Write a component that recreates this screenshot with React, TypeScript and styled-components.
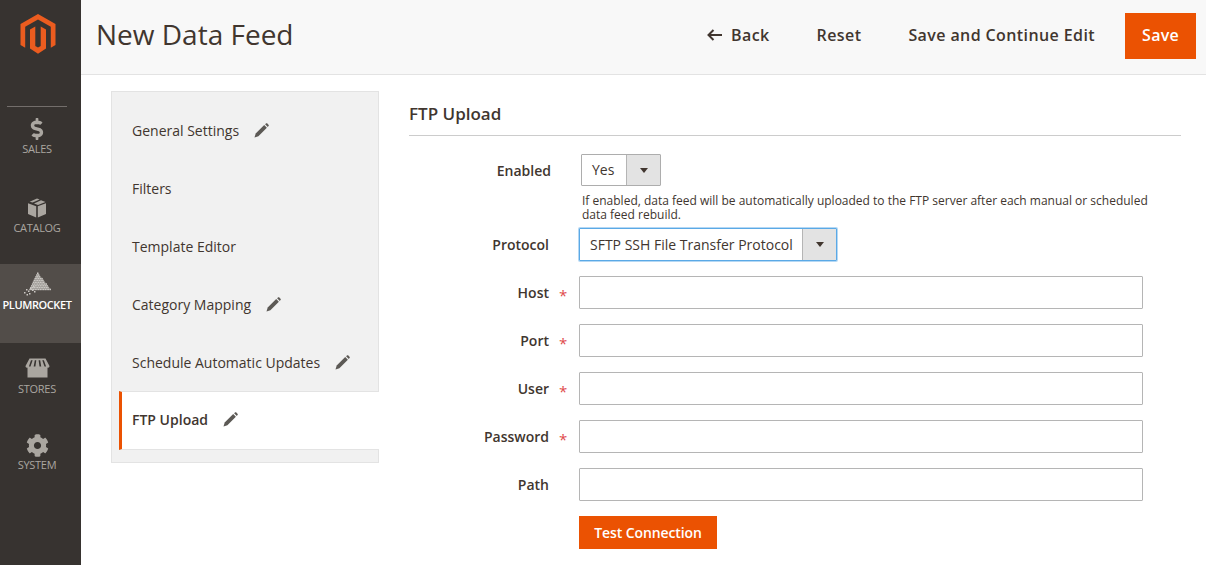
import React from "react";
import styled, { createGlobalStyle } from "styled-components";
import { FaDollarSign, FaCog } from "react-icons/fa";

const Global = createGlobalStyle`
  html, body { margin: 0; padding: 0; background: #fff; }
  body { font-family: "Open Sans", "Liberation Sans", sans-serif; color: #41362f; overflow: hidden; }
  * { box-sizing: border-box; }
`;

const Page = styled.div`
  display: flex;
  width: 1206px;
  height: 565px;
  overflow: hidden;
`;

const Sidebar = styled.nav`
  width: 81px;
  flex: none;
  background: #373330;
  display: flex;
  flex-direction: column;
`;

const LogoWrap = styled.div`
  height: 106px;
  padding-top: 14px;
  padding-right: 6px;
  display: flex;
  justify-content: center;
  align-items: flex-start;
  svg { display: block; }
`;

const Divider = styled.div`
  width: 60px;
  height: 1px;
  margin-left: 7px;
  background: #736e6b;
  margin-bottom: 10px;
`;

const NavItem = styled.div<{ $h: number; $active?: boolean; $top: number }>`
  height: ${(p) => p.$h}px;
  padding-top: ${(p) => p.$top}px;
  padding-right: 7px;
  display: flex;
  flex-direction: column;
  align-items: center;
  background: ${(p) => (p.$active ? "#524d49" : "transparent")};
  color: ${(p) => (p.$active ? "#fff" : "#aaa6a0")};
`;

const NavIcon = styled.div`
  height: 24px;
  display: flex;
  align-items: center;
  justify-content: center;
  color: #aaa6a0;
  svg { display: block; }
`;

const NavLabel = styled.div<{ $active?: boolean; $gap: number }>`
  font-size: 11px;
  font-weight: ${(p) => (p.$active ? 600 : 400)};
  letter-spacing: ${(p) => (p.$active ? "-0.4px" : "-0.3px")};
  line-height: 15px;
  margin-top: ${(p) => p.$gap}px;
  white-space: nowrap;
`;

const Main = styled.div`
  flex: 1;
  display: flex;
  flex-direction: column;
  min-width: 0;
`;

const Header = styled.header`
  height: 75px;
  flex: none;
  background: #f8f8f8;
  border-bottom: 1px solid #e3e3e3;
  display: flex;
  align-items: flex-start;
  padding: 13px 10px 0 15px;
`;

const Title = styled.h1`
  margin: 0;
  font-size: 28px;
  font-weight: 400;
  line-height: 42px;
  color: #41362f;
  flex: 1;
`;

const HeaderAction = styled.button<{ $ml: number }>`
  border: 0;
  background: none;
  padding: 0 0 2px;
  margin-left: ${(p) => p.$ml}px;
  height: 46px;
  display: flex;
  align-items: center;
  gap: 9px;
  font: 600 16px/20px "Open Sans", sans-serif;
  letter-spacing: 0.4px;
  color: #41362f;
  svg { display: block; }
`;

const SaveButton = styled.button`
  margin-left: 30px;
  width: 71px;
  height: 46px;
  border: 0;
  padding: 0 0 2px;
  background: #eb5202;
  color: #fff;
  font: 600 16px/20px "Open Sans", sans-serif;
  letter-spacing: 0.25px;
`;

const Content = styled.div`
  flex: 1;
  display: flex;
  align-items: flex-start;
  padding: 16px 25px 0 30px;
`;

const Tabs = styled.div`
  width: 268px;
  height: 372px;
  flex: none;
  background: #f1f1f1;
  border: 1px solid #e3e3e3;
  padding: 9px 0 0 7px;
  display: flex;
  flex-direction: column;
`;

const Tab = styled.div<{ $active?: boolean }>`
  height: ${(p) => (p.$active ? 59 : 58)}px;
  flex: none;
  display: flex;
  align-items: center;
  margin-right: -1px;
  padding-left: ${(p) => (p.$active ? "10px" : "13px")};
  padding-bottom: ${(p) => (p.$active ? "2px" : "0")};
  font-size: 14px;
  font-weight: ${(p) => (p.$active ? 600 : 400)};
  color: #41362f;
  background: ${(p) => (p.$active ? "#fff" : "transparent")};
  border-left: ${(p) => (p.$active ? "3px solid #eb5202" : "0")};
  border-top: ${(p) => (p.$active ? "1px solid #e3e3e3" : "0")};
  border-bottom: ${(p) => (p.$active ? "1px solid #e3e3e3" : "0")};
  svg { display: block; margin-left: 15px; color: #5c5955; }
`;

const Form = styled.section`
  flex: 1;
  margin-left: 30px;
`;

const Heading = styled.h2`
  margin: 0;
  height: 45px;
  padding-top: 11px;
  font-size: 17px;
  font-weight: 600;
  line-height: 24px;
  color: #41362f;
  border-bottom: 1px solid #cccccc;
`;

const Row = styled.div<{ $mt: number }>`
  display: flex;
  align-items: flex-start;
  margin-top: ${(p) => p.$mt}px;
`;

const LabelBox = styled.label<{ $w?: number; $lh?: number }>`
  width: ${(p) => p.$w ?? 140}px;
  flex: none;
  height: 33px;
  text-align: right;
  font-size: 14px;
  font-weight: 600;
  line-height: ${(p) => p.$lh ?? 33}px;
  color: #41362f;
`;

const Star = styled.span`
  flex: none;
  width: 30px;
  height: 33px;
  padding-left: 10px;
  color: #e04a4a;
  font-size: 15px;
  line-height: 38px;
`;

const Spacer = styled.div<{ $w: number }>`
  width: ${(p) => p.$w}px;
  flex: none;
`;

const Input = styled.div`
  width: 564px;
  height: 33px;
  background: #fff;
  border: 1px solid #b5b5b5;
  border-radius: 1px;
`;

const SelectBox = styled.div<{ $w: number; $focus?: boolean }>`
  width: ${(p) => p.$w}px;
  height: ${(p) => (p.$focus ? 33 : 32)}px;
  display: flex;
  background: #fff;
  border: 1px solid ${(p) => (p.$focus ? "#5aa9e6" : "#adadad")};
  box-shadow: ${(p) => (p.$focus ? "0 0 0 1px rgba(90,169,230,.45)" : "none")};
  border-radius: 1px;
  font-size: 14px;
  color: #41362f;
`;

const SelectValue = styled.div<{ $pad: number; $lh: number }>`
  flex: 1;
  padding-left: ${(p) => p.$pad}px;
  line-height: ${(p) => p.$lh}px;
  white-space: nowrap;
`;

const SelectArrow = styled.div`
  width: 34px;
  flex: none;
  background: #e3e3e3;
  border-left: 1px solid #b5b5b5;
  display: flex;
  align-items: center;
  justify-content: center;
  &::after {
    content: "";
    border-left: 4.5px solid transparent;
    border-right: 4.5px solid transparent;
    border-top: 5px solid #41362f;
  }
`;

const Note = styled.p`
  margin: 7px 0 0 173px;
  width: 590px;
  font-size: 12px;
  line-height: 14px;
  color: #41362f;
`;

const TestButton = styled.button`
  width: 138px;
  height: 33px;
  border: 0;
  padding: 0;
  background: #eb5202;
  color: #fff;
  font: 600 14px/20px "Open Sans", sans-serif;
  letter-spacing: -0.1px;
`;

const MagentoLogo = () => (
  <svg width="36" height="40" viewBox="0 0 36 40" fill="#eb5c1f">
    <path d="M18 0 L35.5 10 V31 L30.8 33.7 V12.7 L18 5.4 L5.2 12.7 V33.7 L0.5 31 V10 Z" />
    <path d="M15.3 12.4 L10 15.4 V34.6 L18 39.8 L26 34.6 V15.4 L20.7 12.4 V32 L18 33.6 L15.3 32 Z" />
  </svg>
);

const BackArrow = () => (
  <svg width="15" height="12" viewBox="0 0 15 12" fill="none" stroke="currentColor" strokeWidth="2">
    <path d="M15 6 H1.5" />
    <path d="M6.5 1 L1.5 6 L6.5 11" />
  </svg>
);

const Pencil = () => (
  <svg width="15" height="15" viewBox="0 0 15 15" fill="currentColor">
    <path d="M0.5 14.5 L1.7 10.6 L10.2 2.1 L12.9 4.8 L4.4 13.3 Z" />
    <path d="M11.1 1.2 L12.2 0.3 Q12.7 0 13.1 0.3 L14.7 1.9 Q15 2.3 14.7 2.8 L13.8 3.9 Z" />
  </svg>
);

const BoxIcon = () => (
  <svg width="20" height="20" viewBox="0 0 20 20" fill="currentColor">
    <path d="M10 0.5 L12.6 1.6 L5.6 4.6 L2.6 3.7 Z" />
    <path d="M14 2.2 L18.5 4 L11 7 L7 5.5 Z" />
    <path d="M1 5.2 L9.2 8.3 L9.2 19.5 L1 16 Z" />
    <path d="M19 5.2 L19 16 L10.8 19.5 L10.8 8.3 Z" />
  </svg>
);

const StoreIcon = () => (
  <svg width="25" height="20" viewBox="0 0 25 20" fill="currentColor">
    <path
      fillRule="evenodd"
      d="M4.5 0.5 H20.5 L24.5 8 C24.5 9.8 23 10 22.5 9.4 V19.5 H2.5 V9.4 C2 10 0.5 9.8 0.5 8 Z M6 2.2 L3.9 8.4 H5.5 L7.6 2.2 Z M9.8 2.2 L8.7 8.4 H10.4 L11.3 2.2 Z M13.6 2.2 L14.5 8.4 H16.2 L15.2 2.2 Z M17.3 2.2 L19.5 8.4 H21.1 L18.9 2.2 Z"
    />
  </svg>
);

const dots: [number, number][] = [];
for (let r = 0; r < 10; r++) {
  for (let x = 14 - r * 0.85; x <= 14 + r * 1.45; x += 1.7) {
    dots.push([x, r * 1.8 + 0.5]);
  }
}

const scatter: [number, number][] = [
  [1, 20], [3, 17], [5, 18.5], [6, 21], [7, 15.5], [9, 17.5], [10, 14], [11, 19], [3.5, 22],
];

const RocketIcon = () => (
  <svg width="28" height="24" viewBox="0 0 28 24" fill="#cbc8c4">
    <path d="M14.7 0.5 L28 17.5 L6.5 17.5 Z" opacity="0.35" />
    {dots.map(([x, y], i) => (
      <rect key={i} x={x} y={y} width="1.5" height="1.5" />
    ))}
    {scatter.map(([x, y], i) => (
      <rect key={i} x={x} y={y} width="1.5" height="1.5" />
    ))}
  </svg>
);

const tabs = [
  { name: "General Settings", pen: true },
  { name: "Filters" },
  { name: "Template Editor" },
  { name: "Category Mapping", pen: true },
  { name: "Schedule Automatic Updates", pen: true },
];

const fields = [
  { name: "Host", req: true },
  { name: "Port", req: true },
  { name: "User", req: true },
  { name: "Password", req: true },
  { name: "Path" },
];

export default function App() {
  return (
    <Page>
      <Global />
      <Sidebar>
        <LogoWrap>
          <MagentoLogo />
        </LogoWrap>
        <Divider />
        <NavItem $h={79} $top={0}>
          <NavIcon><FaDollarSign size={22} /></NavIcon>
          <NavLabel $gap={0}>SALES</NavLabel>
        </NavItem>
        <NavItem $h={68} $top={0}>
          <NavIcon><BoxIcon /></NavIcon>
          <NavLabel $gap={0}>CATALOG</NavLabel>
        </NavItem>
        <NavItem $h={79} $active $top={8}>
          <NavIcon><RocketIcon /></NavIcon>
          <NavLabel $active $gap={1}>PLUMROCKET</NavLabel>
        </NavItem>
        <NavItem $h={80} $top={13}>
          <NavIcon><StoreIcon /></NavIcon>
          <NavLabel $gap={1}>STORES</NavLabel>
        </NavItem>
        <NavItem $h={70} $top={10}>
          <NavIcon><FaCog size={23} /></NavIcon>
          <NavLabel $gap={0}>SYSTEM</NavLabel>
        </NavItem>
      </Sidebar>
      <Main>
        <Header>
          <Title>New Data Feed</Title>
          <HeaderAction $ml={0}><BackArrow />Back</HeaderAction>
          <HeaderAction $ml={47}>Reset</HeaderAction>
          <HeaderAction $ml={47}>Save and Continue Edit</HeaderAction>
          <SaveButton>Save</SaveButton>
        </Header>
        <Content>
          <Tabs>
            {tabs.map((t) => (
              <Tab key={t.name}>
                {t.name}
                {t.pen && <Pencil />}
              </Tab>
            ))}
            <Tab $active>
              FTP Upload
              <Pencil />
            </Tab>
          </Tabs>
          <Form>
            <Heading>FTP Upload</Heading>
            <Row $mt={18}>
              <LabelBox $w={142} $lh={34}>Enabled</LabelBox>
              <Spacer $w={30} />
              <SelectBox $w={80}>
                <SelectValue $pad={10} $lh={30}>Yes</SelectValue>
                <SelectArrow />
              </SelectBox>
            </Row>
            <Note>If enabled, data feed will be automatically uploaded to the FTP server after each manual or scheduled data feed rebuild.</Note>
            <Row $mt={6}>
              <LabelBox>Protocol</LabelBox>
              <Spacer $w={30} />
              <SelectBox $w={258} $focus>
                <SelectValue $pad={10} $lh={32}>SFTP SSH File Transfer Protocol</SelectValue>
                <SelectArrow />
              </SelectBox>
            </Row>
            {fields.map((f) => (
              <Row $mt={15} key={f.name}>
                <LabelBox>{f.name}</LabelBox>
                {f.req ? <Star>*</Star> : <Spacer $w={30} />}
                <Input />
              </Row>
            ))}
            <Row $mt={15}>
              <Spacer $w={170} />
              <TestButton>Test Connection</TestButton>
            </Row>
          </Form>
        </Content>
      </Main>
    </Page>
  );
}
